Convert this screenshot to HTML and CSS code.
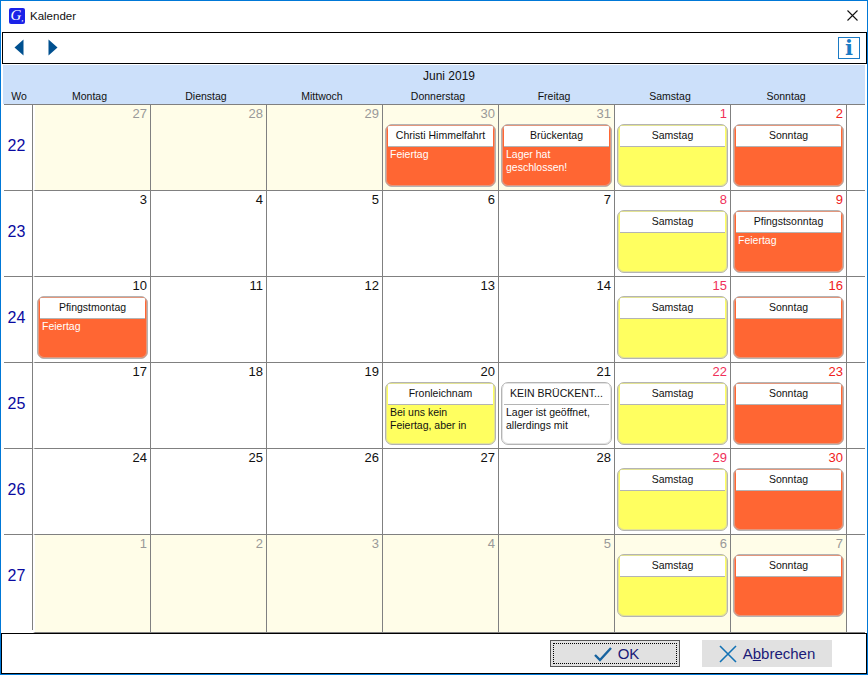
FILE: index.html
```html
<!DOCTYPE html>
<html lang="de">
<head>
<meta charset="utf-8">
<title>Kalender</title>
<link rel="stylesheet" href="styles.css">
</head>
<body>
<div class="window">
  <header class="titlebar">
    <span class="logo"><span class="logo-g">G</span><span class="logo-dot">,</span></span>
    <span class="title">Kalender</span>
    <svg class="close" width="11" height="11" viewBox="0 0 11 11"><path d="M0.5 0.5L10.5 10.5M10.5 0.5L0.5 10.5" stroke="#111" stroke-width="1.1" fill="none"/></svg>
  </header>
  <div class="toolbar">
    <svg class="arrow arrow-left" width="10" height="17" viewBox="0 0 10 17"><path d="M9.5 0.5V16.5L0.5 8.5Z" fill="#00508f"/></svg>
    <svg class="arrow arrow-right" width="10" height="17" viewBox="0 0 10 17"><path d="M0.5 0.5V16.5L9.5 8.5Z" fill="#00508f"/></svg>
    <span class="info">i</span>
  </div>
  <div class="head">
    <div class="month">Juni 2019</div>
    <div class="weekdays">
      <span class="wo">Wo</span><span>Montag</span><span>Dienstag</span><span>Mittwoch</span><span>Donnerstag</span><span>Freitag</span><span>Samstag</span><span>Sonntag</span>
    </div>
  </div>
  <div class="calendar">
    <div class="wk">22</div>
    <div class="day off first"><div class="num">27</div></div>
    <div class="day off"><div class="num">28</div></div>
    <div class="day off"><div class="num">29</div></div>
    <div class="day off"><div class="num">30</div><div class="card orange"><div class="card-h">Christi Himmelfahrt</div><div class="card-b">Feiertag</div></div></div>
    <div class="day off"><div class="num">31</div><div class="card orange"><div class="card-h">Brückentag</div><div class="card-b">Lager hat geschlossen!</div></div></div>
    <div class="day"><div class="num sat">1</div><div class="card yellow"><div class="card-h">Samstag</div></div></div>
    <div class="day"><div class="num sun">2</div><div class="card orange"><div class="card-h">Sonntag</div></div></div>
    <div class="end"></div>

    <div class="wk">23</div>
    <div class="day first"><div class="num">3</div></div>
    <div class="day"><div class="num">4</div></div>
    <div class="day"><div class="num">5</div></div>
    <div class="day"><div class="num">6</div></div>
    <div class="day"><div class="num">7</div></div>
    <div class="day"><div class="num sat">8</div><div class="card yellow"><div class="card-h">Samstag</div></div></div>
    <div class="day"><div class="num sun">9</div><div class="card orange"><div class="card-h">Pfingstsonntag</div><div class="card-b">Feiertag</div></div></div>
    <div class="end"></div>

    <div class="wk">24</div>
    <div class="day first"><div class="num">10</div><div class="card orange"><div class="card-h">Pfingstmontag</div><div class="card-b">Feiertag</div></div></div>
    <div class="day"><div class="num">11</div></div>
    <div class="day"><div class="num">12</div></div>
    <div class="day"><div class="num">13</div></div>
    <div class="day"><div class="num">14</div></div>
    <div class="day"><div class="num sat">15</div><div class="card yellow"><div class="card-h">Samstag</div></div></div>
    <div class="day"><div class="num sun">16</div><div class="card orange"><div class="card-h">Sonntag</div></div></div>
    <div class="end"></div>

    <div class="wk">25</div>
    <div class="day first"><div class="num">17</div></div>
    <div class="day"><div class="num">18</div></div>
    <div class="day"><div class="num">19</div></div>
    <div class="day"><div class="num">20</div><div class="card yellow dark"><div class="card-h">Fronleichnam</div><div class="card-b">Bei uns kein Feiertag, aber in</div></div></div>
    <div class="day"><div class="num">21</div><div class="card white dark"><div class="card-h">KEIN BRÜCKENT...</div><div class="card-b">Lager ist geöffnet, allerdings mit</div></div></div>
    <div class="day"><div class="num sat">22</div><div class="card yellow"><div class="card-h">Samstag</div></div></div>
    <div class="day"><div class="num sun">23</div><div class="card orange"><div class="card-h">Sonntag</div></div></div>
    <div class="end"></div>

    <div class="wk">26</div>
    <div class="day first"><div class="num">24</div></div>
    <div class="day"><div class="num">25</div></div>
    <div class="day"><div class="num">26</div></div>
    <div class="day"><div class="num">27</div></div>
    <div class="day"><div class="num">28</div></div>
    <div class="day"><div class="num sat">29</div><div class="card yellow"><div class="card-h">Samstag</div></div></div>
    <div class="day"><div class="num sun">30</div><div class="card orange"><div class="card-h">Sonntag</div></div></div>
    <div class="end"></div>

    <div class="wk last">27</div>
    <div class="day off first"><div class="num">1</div></div>
    <div class="day off"><div class="num">2</div></div>
    <div class="day off"><div class="num">3</div></div>
    <div class="day off"><div class="num">4</div></div>
    <div class="day off"><div class="num">5</div></div>
    <div class="day off"><div class="num">6</div><div class="card yellow"><div class="card-h">Samstag</div></div></div>
    <div class="day off"><div class="num">7</div><div class="card orange"><div class="card-h">Sonntag</div></div></div>
    <div class="end"></div>
  </div>
  <footer class="footer">
    <button class="btn btn-ok" type="button">
      <svg width="18" height="16" viewBox="0 0 18 16"><path d="M1 9L6 14L17 2" stroke="#17639f" stroke-width="2.4" fill="none"/></svg>
      <span>OK</span>
    </button>
    <button class="btn" type="button">
      <svg width="18" height="18" viewBox="0 0 18 18"><path d="M1 1L17 17M17 1L1 17" stroke="#1272b5" stroke-width="1.6" fill="none"/></svg>
      <span>A<u>b</u>brechen</span>
    </button>
  </footer>
</div>
</body>
</html>
```
FILE: styles.css
```css
* { box-sizing: border-box; }
html, body { margin: 0; padding: 0; }
body { background: #fff; font-family: "Liberation Sans", Arial, sans-serif; }

.window {
  width: 868px;
  height: 675px;
  border: 1px solid #0078d7;
  background: #fff;
  display: flex;
  flex-direction: column;
  overflow: hidden;
}

.titlebar {
  height: 31px;
  flex: none;
  display: flex;
  align-items: center;
  padding: 0 9px 2px 8px;
}
.logo {
  width: 16px;
  height: 16px;
  background: #1a22e8;
  border-radius: 2px;
  color: #fff;
  display: flex;
  align-items: center;
  justify-content: center;
  font: italic 15px "Liberation Serif", serif;
}
.logo-dot { font-size: 9px; margin-top: 4px; }
.title { margin-left: 5px; font-size: 11.5px; color: #111; flex: 1; }
.close { display: block; }

.toolbar {
  height: 32px;
  flex: none;
  margin: 0 0 0 1px;
  width: 865px;
  border: 1px solid #000;
  display: flex;
  align-items: center;
  padding: 0 6px 0 11px;
}
.arrow { margin-bottom: 2px; }
.arrow-right { margin-left: 24px; }
.info {
  margin-left: auto;
  width: 22px;
  height: 22px;
  border: 1px solid #1a7ac4;
  color: #1a7ac4;
  font: bold 21px/19px "DejaVu Serif", serif;
  text-align: center;
}

.head {
  margin: 1px 0 0 2px;
  width: 862px;
  height: 39px;
  flex: none;
  background: #cce0fa;
  color: #111;
  font-size: 10.5px;
}
.month { text-align: center; font-size: 12px; height: 24px; padding: 4px 0 0 30px; }
.weekdays {
  display: grid;
  grid-template-columns: 28px 117px repeat(6, 116px);
  text-align: center;
  line-height: 14px;
}
.wo { padding-left: 4px; white-space: nowrap; }

.calendar {
  margin-left: 3px;
  width: 861px;
  flex: none;
  display: grid;
  grid-template-columns: 29px 118px repeat(6, 116px) 18px;
  grid-template-rows: repeat(5, 86px) 98px;
  border-top: 1px solid #808080;
  height: 529px;
}
.wk {
  border-right: 1px solid #808080;
  border-bottom: 1px solid #808080;
  color: #0a0aa0;
  font-size: 16px;
  line-height: 18px;
  padding: 32px 3px 0 0;
  text-align: center;
}
.wk.last { border-bottom: 0; margin-bottom: 3px; }
.day {
  border-right: 1px solid #808080;
  border-bottom: 1px solid #808080;
  padding: 0 2px;
  display: flex;
  flex-direction: column;
}
.day.first { border-left: 2px solid #fff; }
.day.off { background: #fffde8; }
.end { border-bottom: 1px solid #808080; }
.num {
  height: 19px;
  flex: none;
  text-align: right;
  font-size: 13px;
  line-height: 17px;
  padding-right: 1px;
  color: #111;
}
.off .num { color: #999; }
.num.sat { color: #f0305a; }
.num.sun { color: #f02020; }

.card {
  width: 111px;
  height: 63px;
  flex: none;
  border: 1px solid #b4b4b4;
  box-shadow: inset 0 0 0 1px rgba(200, 200, 200, 0.5);
  border-radius: 7px;
  padding: 0 1px;
  font-size: 10.5px;
  color: #fff;
  overflow: hidden;
}
.card.orange { background: #ff6633; }
.card.yellow { background: #ffff60; }
.card.white { background: #fff; }
.card.dark { color: #111; }
.card-h {
  height: 21px;
  margin: 1px 1px 0;
  background: #fff;
  border-bottom: 1px solid #b4b4b4;
  color: #111;
  text-align: center;
  line-height: 19px;
  white-space: nowrap;
  overflow: hidden;
}
.card-b {
  padding: 1px 3px 0;
  line-height: 13px;
}

.footer {
  height: 41px;
  width: 866px;
  flex: none;
  border: 1px solid #000;
  display: flex;
  align-items: center;
  justify-content: flex-end;
  gap: 22px;
  padding: 0 34px 0 0;
}
.btn {
  width: 130px;
  height: 27px;
  border: 0;
  padding: 0;
  background: #e1e1e1;
  color: #1a1a78;
  font: 15px "Liberation Sans", Arial, sans-serif;
  display: flex;
  align-items: center;
  justify-content: center;
  gap: 6px;
}
.btn-ok {
  border: 1px solid #555;
  outline: 1px dotted #000;
  outline-offset: -4px;
  padding-left: 3px;
}
```
